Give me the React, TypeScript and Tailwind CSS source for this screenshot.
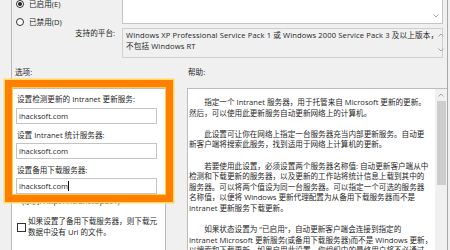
import React from "react";

function Up() {
  return (
    <svg width="6" height="4" viewBox="0 0 6 4" className="block">
      <path d="M0.5 3.5L3 1L5.5 3.5" fill="none" stroke="#a3a3a3" strokeWidth="1" />
    </svg>
  );
}
function Down() {
  return (
    <svg width="6" height="4" viewBox="0 0 6 4" className="block">
      <path d="M0.5 0.5L3 3L5.5 0.5" fill="none" stroke="#a3a3a3" strokeWidth="1" />
    </svg>
  );
}

const helpLines = [
  "\u3000\u3000指定一个 Intranet 服务器，用于托管来自 Microsoft 更新的更新。",
  "然后，可以使用此更新服务自动更新网络上的计算机。",
  "",
  "\u3000\u3000此设置可让你在网络上指定一台服务器充当内部更新服务。自动更",
  "新客户端将搜索此服务，找到适用于网络上计算机的更新。",
  "",
  "\u3000\u3000若要使用此设置，必须设置两个服务器名称值: 自动更新客户端从中",
  "检测和下载更新的服务器，以及更新的工作站将统计信息上载到其中的",
  "服务器。可以将两个值设为同一台服务器。可以指定一个可选的服务器",
  "名称值，以便将 Windows 更新代理配置为从备用下载服务器而不是",
  "Intranet 更新服务下载更新。",
  "",
  "\u3000\u3000如果状态设置为 “已启用”，自动更新客户端会连接到指定的",
  "Intranet Microsoft 更新服务(或备用下载服务器)而不是 Windows 更新，",
  "以搜索和下载更新。如果启用此设置，你组织中的最终用户将不必通过",
];

function Input({ caret }: { caret?: boolean }) {
  return (
    <div className="ml-[4px] w-[141px] h-[16px] border border-[#c4c4c4] bg-white flex items-center pl-[2px]">
      <span className="leading-[12px]">ihacksoft.com</span>
      {caret && <span className="w-[1px] h-[10px] bg-[#111]" />}
    </div>
  );
}

export default function App() {
  return (
    <div className="w-[450px] h-[250px] overflow-hidden bg-[#f0f0f0] text-[#1f1f1f] text-[7.6px] relative font-['Open_Sans','Noto_Sans_CJK_SC',sans-serif]">
      <div className="ml-[11px] w-[437px] h-[250px] border-l border-r border-l-[#bababa] border-r-[#a8a8a8] flex flex-col">
        {/* top section */}
        <div className="flex -mt-[20px] h-[78px] shrink-0">
          <div className="w-[110px] pt-[18px] flex flex-col">
            <div className="flex items-center h-[12px] pl-[4px]">
              <span className="w-[8px] h-[8px] rounded-full border border-[#333] bg-white flex items-center justify-center">
                <span className="w-[4px] h-[4px] rounded-full bg-[#222]" />
              </span>
              <span className="ml-[5px] leading-[12px]">已启用(E)</span>
            </div>
            <div className="flex items-center h-[12px] pl-[4px] mt-[6px]">
              <span className="w-[8px] h-[8px] rounded-full border border-[#333] bg-white" />
              <span className="ml-[5px] leading-[12px]">已禁用(D)</span>
            </div>
            <div className="h-[12px] leading-[12px] -mt-[1px] pr-[7px] text-right">支持的平台:</div>
          </div>
          <div className="w-[321px] flex flex-col gap-[4px]">
            <div className="h-[44px] bg-white border border-[#c4c4c4] flex justify-end">
              <div className="w-[13px] flex flex-col justify-between items-center pt-[3px] pb-[5px]">
                <Up />
                <Down />
              </div>
            </div>
            <div className="h-[30px] border border-[#cfcfcf] bg-[#f0f0f0] flex">
              <div className="flex-1 pl-[3px] pt-[1px] leading-[11px] whitespace-nowrap tracking-[0.12px]">
                <div>Windows XP Professional Service Pack 1 或 Windows 2000 Service Pack 3 及以上版本，</div>
                <div>不包括 Windows RT</div>
              </div>
              <div className="w-[13px] flex flex-col justify-between items-center pt-[4px] pb-[5px]">
                <Up />
                <Down />
              </div>
            </div>
          </div>
        </div>

        {/* section labels */}
        <div className="flex mt-[8px] h-[12px] leading-[12px] shrink-0">
          <div className="w-[176px] pl-[3px]">选项:</div>
          <div>帮助:</div>
        </div>

        {/* panels */}
        <div className="flex mt-[10px] flex-1 min-h-0">
          <div className="w-[154px] bg-white border-t border-r border-[#bcbcbc] pl-[5px] pt-[4px] flex flex-col">
            <div className="h-[12px] leading-[12px] whitespace-nowrap">设置检测更新的 Intranet 更新服务:</div>
            <div className="mt-[3px] -ml-[5px]"><Input /></div>
            <div className="mt-[5px] h-[12px] leading-[12px] whitespace-nowrap">设置 Intranet 统计服务器:</div>
            <div className="mt-[2px] -ml-[5px]"><Input /></div>
            <div className="mt-[5px] h-[12px] leading-[12px] whitespace-nowrap">设置备用下载服务器:</div>
            <div className="mt-[2px] -ml-[5px]"><Input caret /></div>
            <div className="mt-[1px] ml-[5px] h-[12px] leading-[12px] whitespace-nowrap">(示例:  http://IntranetUpd01)</div>
            <div className="mt-[9px] flex items-center">
              <span className="w-[9px] h-[9px] border border-[#333] bg-white shrink-0" />
              <div className="ml-[2px] leading-[11px] whitespace-nowrap">
                <div>如果设置了备用下载服务器，则下载元</div>
                <div>数据中没有 Url 的文件。</div>
              </div>
            </div>
          </div>

          <div className="ml-[21px] w-[260px] bg-white border-t border-l border-[#bcbcbc] flex">
            <div className="flex-1 pl-[1px] pt-[8px] leading-[10.6px] whitespace-pre">
              {helpLines.map((l, i) => (
                <div key={i} className="h-[10.6px]">{l === "" ? "\u00a0" : l}</div>
              ))}
            </div>
            <div className="w-[12px] bg-[#f0f0f0] flex flex-col items-center">
              <div className="h-[12px] flex items-center justify-center">
                <Up />
              </div>
              <div className="w-[9px] h-[84px] bg-[#cdcdcd]" />
            </div>
          </div>
        </div>
      </div>

      {/* orange highlight overlay */}
      <div className="absolute left-[5px] top-[80px] w-[168px] h-[122px] border-[7px] border-[#ff7f00] shadow-[0_0_0_1.5px_#ffd966,inset_0_0_0_1px_#ffcf4a]" />
    </div>
  );
}
